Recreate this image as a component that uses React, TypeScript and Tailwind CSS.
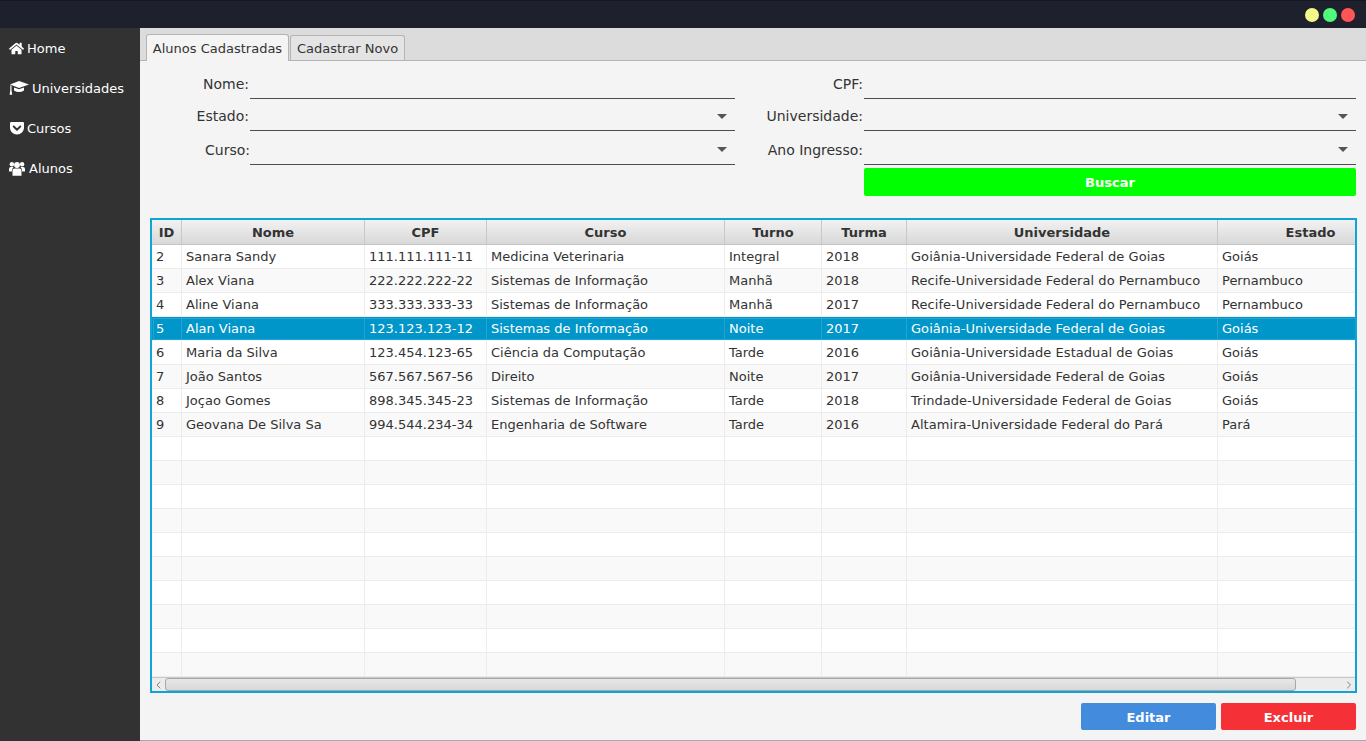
import React from "react";
import { FaGetPocket, FaHome } from "react-icons/fa";
import { ChevronLeft, ChevronRight } from "lucide-react";

type Aluno = {
  id: number;
  nome: string;
  cpf: string;
  curso: string;
  turno: string;
  turma: string;
  universidade: string;
  estado: string;
};

const alunos: Aluno[] = [
  { id: 2, nome: "Sanara Sandy", cpf: "111.111.111-11", curso: "Medicina Veterinaria", turno: "Integral", turma: "2018", universidade: "Goiânia-Universidade Federal de Goias", estado: "Goiás" },
  { id: 3, nome: "Alex Viana", cpf: "222.222.222-22", curso: "Sistemas de Informação", turno: "Manhã", turma: "2018", universidade: "Recife-Universidade Federal do Pernambuco", estado: "Pernambuco" },
  { id: 4, nome: "Aline Viana", cpf: "333.333.333-33", curso: "Sistemas de Informação", turno: "Manhã", turma: "2017", universidade: "Recife-Universidade Federal do Pernambuco", estado: "Pernambuco" },
  { id: 5, nome: "Alan Viana", cpf: "123.123.123-12", curso: "Sistemas de Informação", turno: "Noite", turma: "2017", universidade: "Goiânia-Universidade Federal de Goias", estado: "Goiás" },
  { id: 6, nome: "Maria da Silva", cpf: "123.454.123-65", curso: "Ciência da Computação", turno: "Tarde", turma: "2016", universidade: "Goiânia-Universidade Estadual de Goias", estado: "Goiás" },
  { id: 7, nome: "João Santos", cpf: "567.567.567-56", curso: "Direito", turno: "Noite", turma: "2017", universidade: "Goiânia-Universidade Federal de Goias", estado: "Goiás" },
  { id: 8, nome: "Joçao Gomes", cpf: "898.345.345-23", curso: "Sistemas de Informação", turno: "Tarde", turma: "2018", universidade: "Trindade-Universidade Federal de Goias", estado: "Goiás" },
  { id: 9, nome: "Geovana De Silva Sa", cpf: "994.544.234-34", curso: "Engenharia de Software", turno: "Tarde", turma: "2016", universidade: "Altamira-Universidade Federal do Pará", estado: "Pará" },
];

const headers = ["ID", "Nome", "CPF", "Curso", "Turno", "Turma", "Universidade", "Estado"];
const gridCols = "grid grid-cols-[30px_183px_122px_238px_97px_85px_311px_186px] w-[1252px]";
const SELECTED_ID = 5;
const EMPTY_ROWS = 10;

const CapIcon = () => (
  <svg width="20" height="16" viewBox="0 0 20 16" fill="currentColor">
    <path d="M10 1 L20 4.5 L10 8 L1 4.5 Z" />
    <path d="M1.3 5.2 L2.5 5.7 V10 L3.2 14.8 H0.6 L1.3 10 Z" />
    <path d="M5 7.4 L10 9.2 L15 7.4 V10.5 Q10 13.5 5 10.5 Z" />
  </svg>
);

const UsersIcon = () => (
  <svg width="16" height="15" viewBox="0 0 16 15" fill="currentColor">
    <circle cx="8" cy="4" r="2.9" />
    <circle cx="2.9" cy="3.2" r="2.2" />
    <circle cx="13.1" cy="3.2" r="2.2" />
    <path d="M3.5 14.8 V9.8 Q3.5 7.6 5.5 7.6 H10.5 Q12.5 7.6 12.5 9.8 V14.8 Z" />
    <path d="M0 10.6 V8 Q0 6 2 6 H4.6 Q3 7.2 2.8 10.6 Z" />
    <path d="M16 10.6 V8 Q16 6 14 6 H11.4 Q13 7.2 13.2 10.6 Z" />
  </svg>
);

const menu = [
  { label: "Home", icon: <FaHome size={15} />, gap: "gap-[3px]" },
  { label: "Universidades", icon: <CapIcon />, gap: "gap-[3px]" },
  { label: "Cursos", icon: <FaGetPocket size={16} />, gap: "gap-[2px]" },
  { label: "Alunos", icon: <UsersIcon />, gap: "gap-[4px]" },
];

const Field = ({ label, select, height }: { label: string; select?: boolean; height: string }) => (
  <>
    <div
      className={`${height} flex items-end justify-end pb-[7px] text-[14px] text-[#333333] ${
        label === "Curso:" ? "" : "pr-[1px]"
      }`}
    >
      {label}
    </div>
    <div className={`${height} flex items-center justify-end border-b border-[#4d4d4d] pr-[8px] pt-[4px]`}>
      {select && <div className="h-0 w-0 border-x-[5px] border-t-[5px] border-x-transparent border-t-[#555555]" />}
    </div>
  </>
);

const App = () => {
  return (
    <div className="flex h-[741px] w-[1366px] flex-col overflow-hidden bg-[#f4f4f4] font-['DejaVu_Sans',sans-serif] text-[13px] leading-[16px]">
      <header className="flex h-[28px] items-center justify-end gap-[4px] border-t border-[#15161f] bg-[#1f202d] pr-[11px]">
        <span className="size-[14px] rounded-full bg-[#f3f88a]" />
        <span className="size-[14px] rounded-full bg-[#50fb7c]" />
        <span className="size-[14px] rounded-full bg-[#ff5555]" />
      </header>

      <div className="flex min-h-0 flex-1">
        <aside className="w-[140px] bg-[#323232] pl-[9px] text-white">
          {menu.map((item) => (
            <div key={item.label} className={`flex h-[40px] items-center ${item.gap}`}>
              {item.icon}
              <span className="pt-[2px]">{item.label}</span>
            </div>
          ))}
        </aside>

        <main className="flex min-w-0 flex-1 flex-col border-b border-[#a4aab0]">
          <div className="flex h-[33px] items-end gap-[1px] border-b border-[#b4b4b4] bg-[#dcdcdc] pl-[6px]">
            <div className="-mb-px flex h-[27px] w-[143px] items-center justify-center rounded-t-[3px] border border-b-0 border-[#b4b4b4] bg-[#f4f4f4] pt-[1px] text-[#333333]">
              Alunos Cadastradas
            </div>
            <div className="flex h-[25px] w-[115px] items-center justify-center rounded-t-[3px] border border-b-0 border-[#b4b4b4] bg-[#e4e4e4] pt-[1px] text-[#333333]">
              Cadastrar Novo
            </div>
          </div>

          <section className="grid grid-cols-[110px_485px_129px_492px] pt-[6px]">
            <Field label="Nome:" height="h-[32px]" />
            <Field label="CPF:" height="h-[32px]" />
            <Field label="Estado:" select height="h-[32px]" />
            <Field label="Universidade:" select height="h-[32px]" />
            <Field label="Curso:" select height="h-[34px]" />
            <Field label="Ano Ingresso:" select height="h-[34px]" />
            <button className="col-start-4 mt-[3px] h-[28px] rounded-[2px] bg-[#00ff00] pt-[1px] text-[13px] font-bold text-white">
              Buscar
            </button>
          </section>

          <section className="mt-[22px] ml-[10px] h-[475px] w-[1207px] overflow-hidden border-2 border-[#10a3d6] bg-white text-[#333333]">
            <div className={`${gridCols} h-[25px] border-b border-[#c4c4c4]`}>
              {headers.map((h) => (
                <div
                  key={h}
                  className="flex items-center justify-center border-r border-[#c8c8c8] bg-linear-to-b from-[#f2f2f2] to-[#d8d8d8] pt-[2px] font-bold"
                >
                  {h}
                </div>
              ))}
            </div>

            {alunos.map((a, i) => {
              const selected = a.id === SELECTED_ID;
              const cells = [a.id, a.nome, a.cpf, a.curso, a.turno, a.turma, a.universidade, a.estado];
              return (
                <div
                  key={a.id}
                  className={`${gridCols} h-[24px] border-b ${
                    selected
                      ? "border-[#f4f4f4] bg-[#0096c9] text-white outline outline-1 -outline-offset-2 outline-[#22a5d3]"
                      : i % 2 === 0
                      ? "border-[#ececec] bg-white"
                      : "border-[#ececec] bg-[#f9f9f9]"
                  }`}
                >
                  {cells.map((c, j) => (
                    <div
                      key={j}
                      className={`flex items-center whitespace-nowrap border-r pl-[4px] ${
                        selected ? "border-[#22a5d3]" : "border-[#ececec]"
                      } ${j === 6 ? "tracking-[0.05px]" : ""}`}
                    >
                      {c}
                    </div>
                  ))}
                </div>
              );
            })}

            {Array.from({ length: EMPTY_ROWS }).map((_, i) => (
              <div
                key={i}
                className={`${gridCols} h-[24px] border-b border-[#ececec] ${i % 2 === 0 ? "bg-white" : "bg-[#f9f9f9]"}`}
              >
                {headers.map((h) => (
                  <div key={h} className="border-r border-[#ececec]" />
                ))}
              </div>
            ))}

            <div className="flex h-[14px] items-center border-t border-[#c8c8c8] bg-[#ececec] text-[#808080]">
              <ChevronLeft size={12} className="w-[13px] shrink-0" />
              <div className="h-[13px] w-[1131px] rounded-[3px] border border-[#a8a8a8] bg-linear-to-b from-[#e8e8e8] to-[#d8d8d8]" />
              <div className="flex-1" />
              <ChevronRight size={12} className="w-[12px] shrink-0" />
            </div>
          </section>

          <div className="mt-[10px] flex justify-end gap-[5px] pr-[10px]">
            <button className="h-[27px] w-[135px] rounded-[2px] bg-[#428bdd] pt-[2px] font-bold text-white">Editar</button>
            <button className="h-[27px] w-[135px] rounded-[2px] bg-[#f53137] pt-[2px] font-bold text-white">Excluir</button>
          </div>
        </main>
      </div>
    </div>
  );
};

export default App;
